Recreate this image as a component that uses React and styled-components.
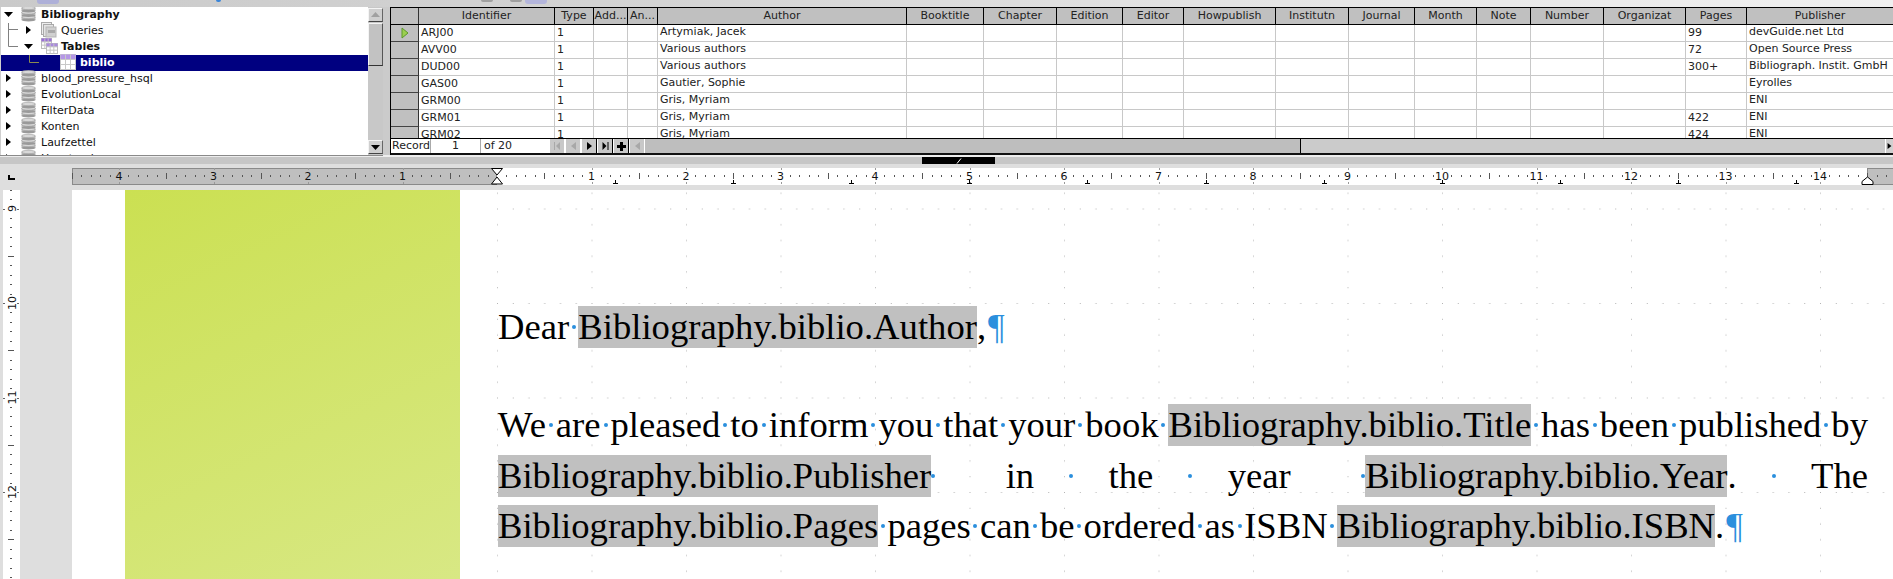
import React from "react";
import styled, { createGlobalStyle } from "styled-components";

const Global = createGlobalStyle`
  html, body { margin: 0; padding: 0; background: #fff; overflow: hidden; }
  #root { width: 1893px; height: 579px; overflow: hidden; }
  * { box-sizing: border-box; }
`;

const Shell = styled.div`
  width: 1893px;
  height: 579px;
  display: flex;
  flex-direction: column;
  overflow: hidden;
  font-family: "DejaVu Sans", sans-serif;
  font-size: 11px;
  color: #111;
`;

const TopStrip = styled.div`
  height: 7px;
  flex: none;
  display: flex;
  align-items: flex-start;
  background: linear-gradient(90deg, #cacaca 0%, #d4d4d4 35%, #e4e4e4 65%, #f0f0f0 100%);
`;
const ToolStub = styled.span`
  flex: none;
  width: ${(p) => p.$w}px;
  height: ${(p) => p.$h || 4}px;
  margin-left: ${(p) => p.$ml}px;
  background: ${(p) => p.$c};
  border-radius: 0 0 3px 3px;
`;

const DataPane = styled.div`
  height: 148px;
  flex: none;
  display: flex;
  background: #cfcfcf;
`;
const TreePanel = styled.div`
  width: 383px;
  flex: none;
  display: flex;
  padding-left: 1px;
  height: 148px;
`;
const TreeList = styled.div`
  position: relative;
  width: 367px;
  flex: none;
  background: #fff;
  overflow: hidden;
`;
const TreeRow = styled.div`
  height: 16px;
  display: flex;
  align-items: center;
  padding-left: ${(p) => p.$indent}px;
  padding-bottom: 2px;
  font-weight: ${(p) => (p.$bold ? 700 : 400)};
  color: ${(p) => (p.$selected ? "#fff" : "#111")};
  background: ${(p) => (p.$selected ? "#000080" : "transparent")};
  white-space: nowrap;
`;
const Expander = styled.span`
  flex: none;
  width: 17px;
  display: flex;
  justify-content: flex-start;
`;
const IconSlot = styled.span`
  flex: none;
  width: 20px;
  height: 16px;
  display: flex;
  align-items: center;
`;
const TreeLines = styled.svg`
  position: absolute;
  left: 0;
  top: 0;
  pointer-events: none;
`;

const VScroll = styled.div`
  width: 15px;
  flex: none;
  display: flex;
  flex-direction: column;
  background: #c8c8c8;
  padding: 1px 0;
`;
const ScrollBtn = styled.div`
  flex: none;
  height: 14px;
  width: 15px;
  display: flex;
  align-items: center;
  justify-content: center;
  background: #cfcfcf;
  border-top: 1px solid #f4f4f4;
  border-left: 1px solid #f4f4f4;
  border-right: 1px solid #666;
  border-bottom: 1px solid #444;
`;
const ScrollThumb = styled.div`
  flex: none;
  height: 43px;
  margin-top: 1px;
  background: #c2c2c2;
  border-top: 1px solid #f4f4f4;
  border-left: 1px solid #f4f4f4;
  border-right: 1px solid #555;
  border-bottom: 1px solid #333;
`;
const ScrollTrack = styled.div`
  flex: 1;
`;

const GridGap = styled.div`
  width: 7px;
  flex: none;
  background: #cbcbcb;
`;
const GridPanel = styled.div`
  flex: 1;
  min-width: 0;
  display: flex;
  flex-direction: column;
  border-left: 1px solid #000;
  overflow: hidden;
`;
const HeaderRow = styled.div`
  height: 18px;
  flex: none;
  display: flex;
  background: #c0c0c0;
  border-top: 1px solid #000;
  border-bottom: 1px solid #000;
`;
const HeaderCell = styled.div`
  flex: 0 0 ${(p) => p.$w}px;
  border-right: 1px solid #000;
  text-align: center;
  line-height: 15px;
  color: #222;
  white-space: nowrap;
  overflow: hidden;
`;
const RowsView = styled.div`
  height: 113px;
  flex: none;
  overflow: hidden;
  background: #fff;
`;
const DataRow = styled.div`
  height: 17px;
  display: flex;
`;
const Handle = styled.div`
  flex: 0 0 28px;
  background: #c0c0c0;
  border-right: 1px solid #333;
  border-bottom: 1px solid #444;
  display: flex;
  align-items: center;
  justify-content: center;
`;
const HeaderCorner = styled.div`
  flex: 0 0 28px;
  border-right: 1px solid #333;
`;
const Cell = styled.div`
  flex: 0 0 ${(p) => p.$w}px;
  border-right: 1px solid #c8c8c8;
  border-bottom: 1px solid #c8c8c8;
  padding-left: 2px;
  line-height: ${(p) => (p.$memo ? 13 : 15)}px;
  color: #222;
  white-space: nowrap;
  overflow: hidden;
`;

const NavBar = styled.div`
  height: 17px;
  flex: none;
  display: flex;
  align-items: stretch;
  border-top: 1px solid #000;
  border-bottom: 2px solid #111;
  background: #cbcbcb;
`;
const NavLabel = styled.div`
  flex: 0 0 ${(p) => p.$w}px;
  background: #fff;
  line-height: 14px;
  padding-left: ${(p) => p.$pl || 0}px;
  text-align: ${(p) => p.$align || "left"};
  border-right: ${(p) => (p.$sep ? "1px solid #aaa" : "none")};
  color: #222;
`;
const NavBtn = styled.div`
  flex: 0 0 16px;
  display: flex;
  align-items: center;
  justify-content: center;
  background: #c8c8c8;
  border-right: 1px solid ${(p) => (p.$on ? "#000" : "#fff")};
  border-left: 1px solid #fff;
`;
const NavThumb = styled.div`
  flex: 0 0 656px;
  background: #bebebe;
  border-right: 1px solid #000;
`;
const NavTrack = styled.div`
  flex: 1;
  background: #cbcbcb;
  display: flex;
  justify-content: flex-end;
`;
const NavEnd = styled.div`
  width: 8px;
  background: #d0d0d0;
  border-left: 1px solid #fff;
  display: flex;
  align-items: center;
`;

const SplitZone = styled.div`
  height: 9px;
  flex: none;
  display: flex;
  flex-direction: column;
  background: #ededed;
`;
const SplitLine = styled.div`
  width: 383px;
  height: 1px;
  background: #8a8a8a;
`;
const SplitBar = styled.div`
  margin-top: 1px;
  height: 7px;
  background: #c6c6c6;
  display: flex;
`;
const SplitHandle = styled.div`
  margin-left: 922px;
  width: 73px;
  height: 7px;
  background: #000;
  display: flex;
  align-items: center;
  justify-content: center;
`;

const RulerBand = styled.div`
  height: 26px;
  flex: none;
  background: #dedede;
  padding-top: 4px;
  display: flex;
  align-items: flex-start;
`;
const RulerCorner = styled.div`
  flex: 0 0 72px;
  padding: 7px 0 0 8px;
`;
const CornerMark = styled.span`
  display: block;
  width: 7px;
  height: 5px;
  border-left: 2px solid #000;
  border-bottom: 2px solid #000;
`;

const Workspace = styled.div`
  flex: 1;
  min-height: 0;
  display: flex;
  background: #dedede;
`;
const VRulerWrap = styled.div`
  flex: 0 0 72px;
  padding-left: 3px;
`;
const Page = styled.div`
  position: relative;
  flex: 1;
  background: #fff;
  display: flex;
  padding-left: 53px;
  overflow: hidden;
`;
const Picture = styled.div`
  flex: 0 0 335px;
  height: 100%;
  background: linear-gradient(155deg, #cbe052 0%, #d8e884 100%);
`;
const GridDots = styled.svg`
  position: absolute;
  left: 425px;
  top: 0;
`;
const TextArea = styled.div`
  position: relative;
  width: 1370px;
  margin-left: 38px;
  padding-top: 116px;
  font-family: "Liberation Serif", serif;
  font-size: 36.65px;
  color: #000;
`;
const Line = styled.div`
  display: flex;
  height: 42px;
  line-height: 42px;
  white-space: pre;
  margin-top: ${(p) => p.$mt || 0}px;
`;
const Word = styled.span`
  flex: none;
`;
const Field = styled(Word)`
  background: #c0c0c0;
`;
const Pilcrow = styled(Word)`
  color: #2b8fdd;
  margin-left: 2px;
`;
const Gap = styled.span`
  flex: ${(p) => (p.$fixed ? "0 0 9.1px" : "1 1 9.1px")};
  display: flex;
  align-items: center;
  justify-content: ${(p) => p.$at || "center"};
  &::after {
    content: "";
    width: 4px;
    height: 4px;
    border-radius: 50%;
    background: #2b8fdd;
  }
`;

const cols = [
  ["Identifier", 136], ["Type", 39], ["Add...", 34], ["An...", 30], ["Author", 249],
  ["Booktitle", 77], ["Chapter", 73], ["Edition", 66], ["Editor", 61], ["Howpublish", 92],
  ["Institutn", 73], ["Journal", 66], ["Month", 62], ["Note", 54], ["Number", 73],
  ["Organizat", 82], ["Pages", 61], ["Publisher", 147],
];
const rows = [
  ["ARJ00", "Artymiak, Jacek", "99", "devGuide.net Ltd"],
  ["AVV00", "Various authors", "72", "Open Source Press"],
  ["DUD00", "Various authors", "300+", "Bibliograph. Instit. GmbH"],
  ["GAS00", "Gautier, Sophie", "", "Eyrolles"],
  ["GRM00", "Gris, Myriam", "", "ENI"],
  ["GRM01", "Gris, Myriam", "422", "ENI"],
  ["GRM02", "Gris, Myriam", "424", "ENI"],
];

const Tri = ({ dir, c = "#000" }) => {
  const pts = {
    right: "2,1 7,5 2,9",
    down: "0,3 9,3 4.5,8",
    up: "0,7 9,7 4.5,2",
    left: "7,1 2,5 7,9",
  }[dir];
  return (
    <svg width="9" height="10" viewBox="0 0 9 10">
      <polygon points={pts} fill={c} />
    </svg>
  );
};
const NavFirst = () => (
  <svg width="9" height="10" viewBox="0 0 9 10">
    <path d="M1.5 1V9" stroke="#a8a8a8" />
    <polygon points="7,1 3,5 7,9" fill="#a8a8a8" />
  </svg>
);
const NavLast = () => (
  <svg width="9" height="10" viewBox="0 0 9 10">
    <polygon points="1.5,1 5.5,5 1.5,9" fill="#000" />
    <path d="M7 1V9" stroke="#000" />
  </svg>
);

const DbIcon = () => (
  <svg width="15" height="16" viewBox="0 0 15 16">
    {[11, 6.5, 2].map((y) => (
      <g key={y}>
        <rect x="0.5" y={y} width="14" height="3" fill="#bdbdbd" />
        <ellipse cx="7.5" cy={y + 3} rx="7" ry="1.5" fill="#9a9a9a" />
        <ellipse cx="7.5" cy={y} rx="7" ry="1.7" fill="#d8d8d8" stroke="#8a8a8a" strokeWidth="0.5" />
      </g>
    ))}
  </svg>
);
const QueryIcon = () => (
  <svg width="16" height="16" viewBox="0 0 16 16">
    <rect x="0.5" y="0.5" width="10" height="12" fill="#eee" stroke="#aaa" />
    <rect x="2.5" y="2.5" width="10" height="12" fill="#e4e4e4" stroke="#aaa" />
    <rect x="5" y="5" width="10" height="10" fill="#d0d0d0" stroke="#b5b5b5" />
    <rect x="7" y="8" width="7" height="3" fill="#a9a9a9" />
  </svg>
);
const TableGrid = ({ x, y, w, h, head }) => {
  const cw = w / 3;
  const ch = h / 3;
  return (
    <g>
      <rect x={x} y={y} width={w} height={h} fill="#fff" stroke="#bbb" strokeWidth="1" />
      <rect x={x} y={y} width={w} height={ch} fill={head} />
      {[1, 2].map((i) => (
        <g key={i}>
          <line x1={x + cw * i} x2={x + cw * i} y1={y} y2={y + h} stroke="#c4c4c4" />
          <line x1={x} x2={x + w} y1={y + ch * i} y2={y + ch * i} stroke="#c4c4c4" />
        </g>
      ))}
    </g>
  );
};
const TablesIcon = () => (
  <svg width="17" height="16" viewBox="0 0 17 16">
    <TableGrid x={0.5} y={0.5} w={10} h={10} head="#9a6fd8" />
    <TableGrid x={5.5} y={5.5} w={11} h={10} head="#a98adf" />
  </svg>
);
const BiblioIcon = () => (
  <svg width="16" height="16" viewBox="0 0 16 16">
    <rect x="0.5" y="0.5" width="15" height="15" fill="#fff" stroke="#c8c8c8" />
    <rect x="0.5" y="0.5" width="15" height="4.5" fill="#b597e6" />
    {[5, 10].map((v) => (
      <line key={v} x1={v + 0.5} x2={v + 0.5} y1="0.5" y2="15.5" stroke="#c8c8c8" />
    ))}
    {[5, 10].map((v) => (
      <line key={v} x1="0.5" x2="15.5" y1={v + 0.5} y2={v + 0.5} stroke="#c8c8c8" />
    ))}
  </svg>
);

const CM = 94.5;
const ORIGIN = 497;
const HRuler = () => {
  const ticks = [];
  const labels = [];
  for (let k = -5; k <= 15; k++) {
    const x0 = ORIGIN + k * CM;
    for (let j = 1; j < 10; j++) {
      const x = Math.round(x0 + (j * CM) / 10);
      const big = j === 5;
      ticks.push(<line key={`${k}-${j}`} x1={x + 0.5} x2={x + 0.5} y1={big ? 5 : 7} y2={big ? 11 : 9} stroke="#555" />);
    }
    if (k !== 0) {
      labels.push(
        <text key={k} x={x0} y="12" textAnchor="middle" fontFamily="DejaVu Sans" fontSize="11" fill="#111">
          {Math.abs(k)}
        </text>
      );
      ticks.push(<line key={`c${k}`} x1={Math.round(x0) + 0.5} x2={Math.round(x0) + 0.5} y1="0" y2="2" stroke="#999" />);
      ticks.push(<line key={`d${k}`} x1={Math.round(x0) + 0.5} x2={Math.round(x0) + 0.5} y1="14" y2="16" stroke="#999" />);
    }
  }
  const tabs = [];
  for (let i = 0; i < 11; i++) {
    const x = Math.round(615 + i * 118.1);
    tabs.push(<path key={i} d={`M${x + 0.5} 12V15.5M${x - 2} 15.5H${x + 3}`} stroke="#000" fill="none" />);
  }
  return (
    <svg width="1821" height="17" viewBox="72 0 1821 17" style={{ display: "block" }}>
      <rect x="72" y="0" width="1821" height="17" fill="#fff" />
      <rect x="72.5" y="0.5" width="424" height="16" fill="#bfbfbf" stroke="#8a8a8a" />
      <rect x="1867.5" y="0.5" width="30" height="16" fill="#bfbfbf" stroke="#8a8a8a" />
      {ticks}
      {labels}
      {tabs}
      <polygon points="491.5,0.5 502.5,0.5 497,7" fill="#fff" stroke="#000" />
      <polygon points="497,9 502.5,16 491.5,16" fill="#fff" stroke="#000" />
      <polygon points="1867.5,9 1873,13.5 1873,16.5 1862,16.5 1862,13.5" fill="#fff" stroke="#000" />
    </svg>
  );
};

const VRuler = () => {
  const Y0 = 208.5 - 190;
  const ticks = [];
  const labels = [];
  for (let k = -1; k <= 4; k++) {
    const y0 = Y0 + k * CM;
    for (let j = 1; j < 10; j++) {
      const y = Math.round(y0 + (j * CM) / 10);
      const big = j === 5;
      ticks.push(<line key={`${k}-${j}`} y1={y + 0.5} y2={y + 0.5} x1={big ? 5 : 7} x2={big ? 11 : 9} stroke="#555" />);
    }
    labels.push(
      <text
        key={k}
        transform={`translate(12.5 ${y0}) rotate(-90)`}
        textAnchor="middle"
        fontFamily="DejaVu Sans"
        fontSize="11"
        fill="#111"
      >
        {9 + k}
      </text>
    );
    ticks.push(<line key={`c${k}`} y1={Math.round(y0) + 0.5} y2={Math.round(y0) + 0.5} x1="0" x2="2" stroke="#666" />);
    ticks.push(<line key={`d${k}`} y1={Math.round(y0) + 0.5} y2={Math.round(y0) + 0.5} x1="14" x2="16" stroke="#666" />);
  }
  return (
    <svg width="17" height="389" viewBox="0 0 17 389" style={{ display: "block" }}>
      <rect width="17" height="389" fill="#fff" />
      {ticks}
      {labels}
    </svg>
  );
};

const DotGrid = () => (
  <GridDots width="1443" height="389">
    <defs>
      <pattern id="docgrid" x="0" y="18.5" width="94.5" height="94.5" patternUnits="userSpaceOnUse">
        {[0, 1, 2, 3, 4, 5].map((i) => (
          <g key={i} fill="#b4b4b4">
            <rect x={i * 15.75} y="0" width="1" height="1" />
            {i > 0 && <rect x="0" y={i * 15.75} width="1" height="1" />}
          </g>
        ))}
      </pattern>
    </defs>
    <rect width="1443" height="389" fill="url(#docgrid)" />
  </GridDots>
);

export default function App() {
  return (
    <Shell>
      <Global />
      <TopStrip>
        <ToolStub $ml={37} $w={22} $c="#aeb0d8" />
        <ToolStub $ml={157} $w={5} $h={2} $c="#3a85d8" />
        <ToolStub $ml={260} $w={12} $h={2} $c="#a0a0a0" />
        <ToolStub $ml={17} $w={12} $h={2} $c="#a0a0a0" />
        <ToolStub $ml={3} $w={22} $c="#b4b6dc" />
      </TopStrip>
      <DataPane>
        <TreePanel>
          <TreeList>
            <TreeRow $indent={3} $bold>
              <Expander><Tri dir="down" /></Expander>
              <IconSlot><DbIcon /></IconSlot>
              Bibliography
            </TreeRow>
            <TreeRow $indent={23}>
              <Expander><Tri dir="right" /></Expander>
              <IconSlot><QueryIcon /></IconSlot>
              Queries
            </TreeRow>
            <TreeRow $indent={23} $bold>
              <Expander><Tri dir="down" /></Expander>
              <IconSlot><TablesIcon /></IconSlot>
              Tables
            </TreeRow>
            <TreeRow $indent={59} $bold $selected>
              <IconSlot><BiblioIcon /></IconSlot>
              biblio
            </TreeRow>
            {["blood_pressure_hsql", "EvolutionLocal", "FilterData", "Konten", "Laufzettel", "Haustand"].map((n) => (
              <TreeRow key={n} $indent={3}>
                <Expander><Tri dir="right" /></Expander>
                <IconSlot><DbIcon /></IconSlot>
                {n}
              </TreeRow>
            ))}
            <TreeLines width="60" height="70">
              <path d="M7.5 16V39.5H17M7.5 22.5H17" stroke="#808080" fill="none" />
              <path d="M28.5 48V55.5H38" stroke="#8a8a50" fill="none" />
            </TreeLines>
          </TreeList>
          <VScroll>
            <ScrollBtn><Tri dir="up" c="#a0a0a0" /></ScrollBtn>
            <ScrollThumb />
            <ScrollTrack />
            <ScrollBtn><Tri dir="down" /></ScrollBtn>
          </VScroll>
        </TreePanel>
        <GridGap />
        <GridPanel>
          <HeaderRow>
            <HeaderCorner />
            {cols.map(([n, w]) => (
              <HeaderCell key={n} $w={w}>{n}</HeaderCell>
            ))}
          </HeaderRow>
          <RowsView>
            {rows.map((r, i) => (
              <DataRow key={r[0]}>
                <Handle>
                  {i === 0 && (
                    <svg width="8" height="12" viewBox="0 0 8 12">
                      <polygon points="1,1 7,6 1,11" fill="#9ccf50" stroke="#5c9a2a" />
                    </svg>
                  )}
                </Handle>
                {cols.map(([n, w], c) => {
                  let v = "";
                  if (c === 0) v = r[0];
                  if (c === 1) v = "1";
                  if (c === 4) v = r[1];
                  if (c === 16) v = r[2];
                  if (c === 17) v = r[3];
                  return (
                    <Cell key={n} $w={w} $memo={c === 4 || c === 17}>{v}</Cell>
                  );
                })}
              </DataRow>
            ))}
          </RowsView>
          <NavBar>
            <NavLabel $w={40} $pl={1} $sep>Record</NavLabel>
            <NavLabel $w={50} $align="center" $sep>1</NavLabel>
            <NavLabel $w={68} $pl={3}>of 20</NavLabel>
            <NavBtn><NavFirst /></NavBtn>
            <NavBtn><Tri dir="left" c="#a8a8a8" /></NavBtn>
            <NavBtn $on><Tri dir="right" /></NavBtn>
            <NavBtn $on><NavLast /></NavBtn>
            <NavBtn $on>
              <svg width="9" height="9" viewBox="0 0 9 9">
                <path d="M3 0h3v3h3v3H6v3H3V6H0V3h3z" fill="#000" />
              </svg>
            </NavBtn>
            <NavBtn><Tri dir="left" c="#a8a8a8" /></NavBtn>
            <NavThumb />
            <NavTrack>
              <NavEnd><Tri dir="right" /></NavEnd>
            </NavTrack>
          </NavBar>
        </GridPanel>
      </DataPane>
      <SplitZone>
        <SplitLine />
        <SplitBar>
          <SplitHandle>
            <svg width="6" height="6" viewBox="0 0 6 6">
              <path d="M1 5.5L5 0.5" stroke="#fff" />
            </svg>
          </SplitHandle>
        </SplitBar>
      </SplitZone>
      <RulerBand>
        <RulerCorner><CornerMark /></RulerCorner>
        <HRuler />
      </RulerBand>
      <Workspace>
        <VRulerWrap><VRuler /></VRulerWrap>
        <Page>
          <DotGrid />
          <Picture />
          <TextArea>
            <Line>
              <Word>Dear</Word><Gap $fixed /><Field>Bibliography.biblio.Author</Field><Word>,</Word><Pilcrow>¶</Pilcrow>
            </Line>
            <Line $mt={56}>
              {["We", "are", "pleased", "to", "inform", "you", "that", "your", "book"].map((w) => (
                <React.Fragment key={w}><Word>{w}</Word><Gap /></React.Fragment>
              ))}
              <Field>Bibliography.biblio.Title</Field><Gap />
              {["has", "been", "published"].map((w) => (
                <React.Fragment key={w}><Word>{w}</Word><Gap /></React.Fragment>
              ))}
              <Word>by</Word>
            </Line>
            <Line $mt={8.5}>
              <Field>Bibliography.biblio.Publisher</Field><Gap $at="flex-start" />
              <Word>in</Word><Gap /><Word>the</Word><Gap /><Word>year</Word><Gap $at="flex-end" />
              <Field>Bibliography.biblio.Year</Field><Word>.</Word><Gap /><Word>The</Word>
            </Line>
            <Line $mt={8.5}>
              <Field>Bibliography.biblio.Pages</Field><Gap $fixed />
              {["pages", "can", "be", "ordered", "as", "ISBN"].map((w) => (
                <React.Fragment key={w}><Word>{w}</Word><Gap $fixed /></React.Fragment>
              ))}
              <Field>Bibliography.biblio.ISBN</Field><Word>.</Word><Pilcrow>¶</Pilcrow>
            </Line>
          </TextArea>
        </Page>
      </Workspace>
    </Shell>
  );
}
